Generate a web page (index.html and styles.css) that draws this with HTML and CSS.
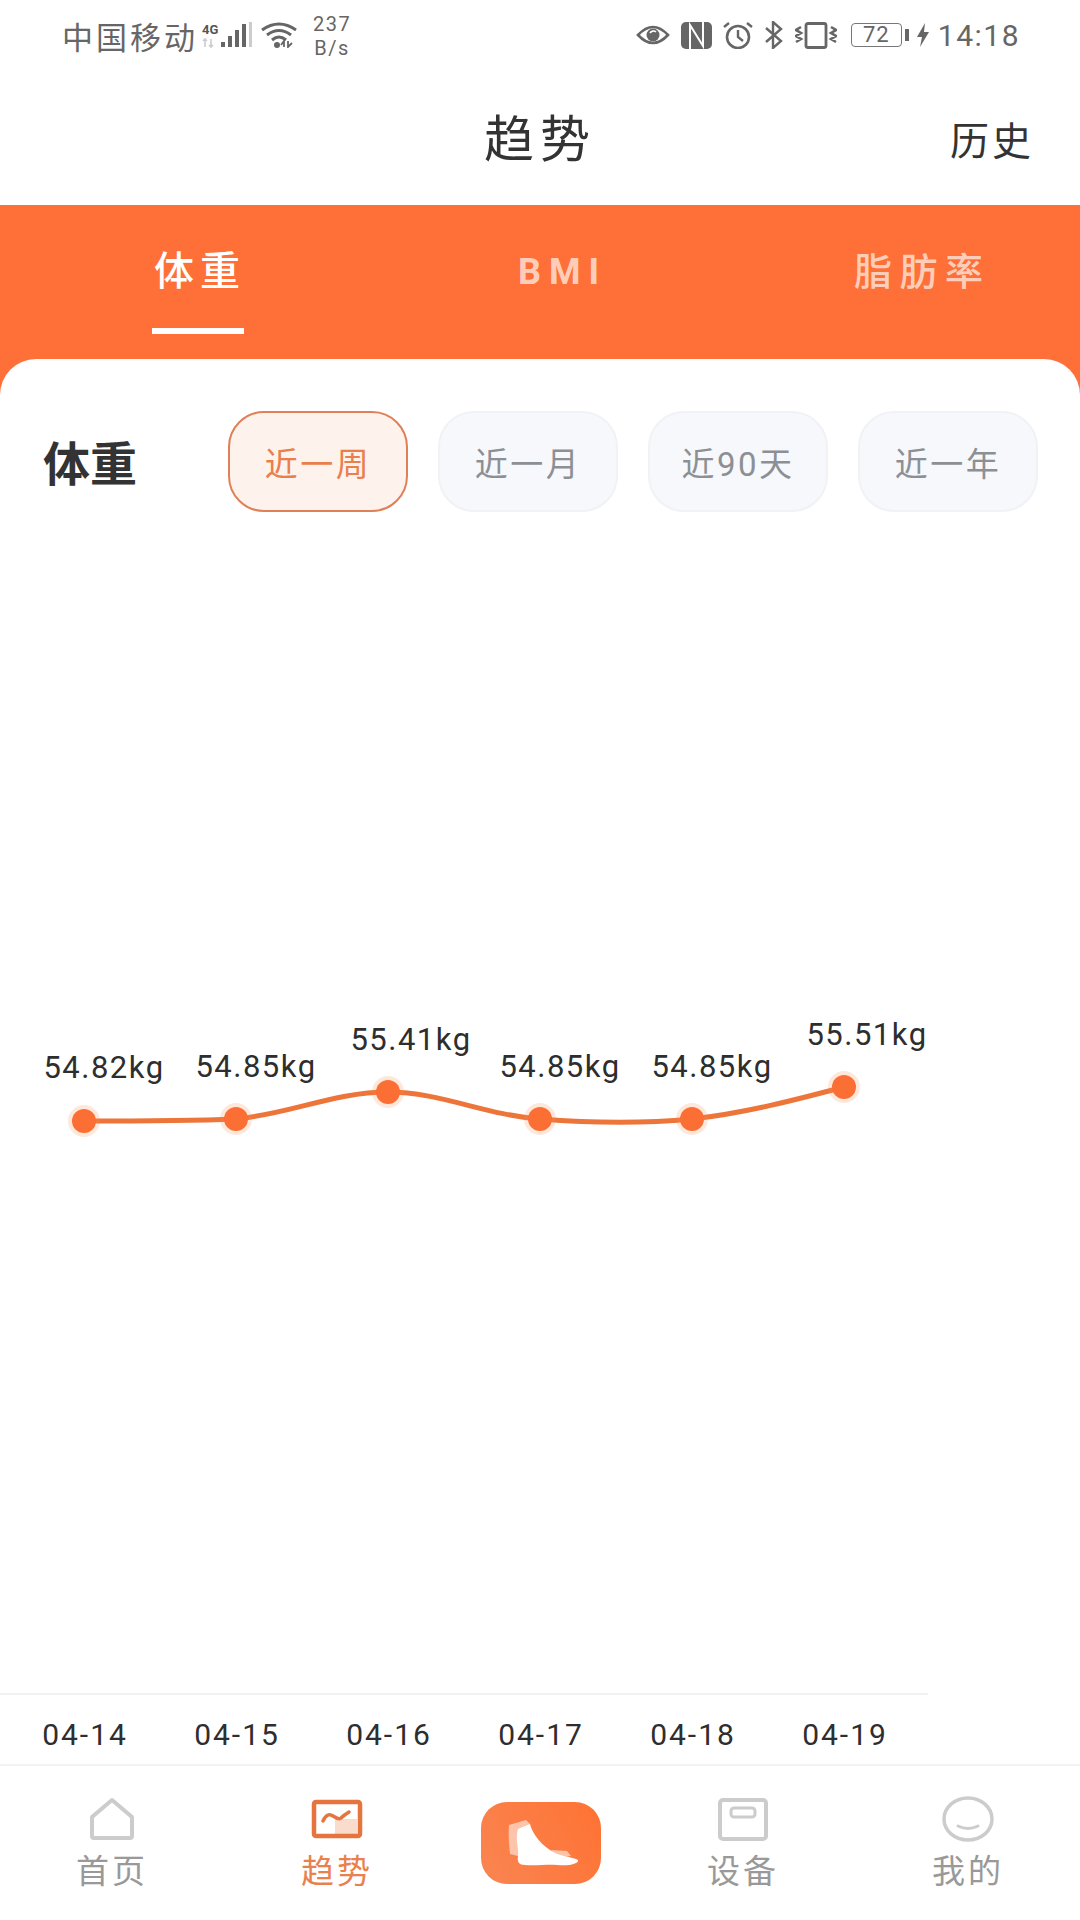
FILE: index.html
```html
<!DOCTYPE html>
<html lang="zh-CN">
<head>
    <meta charset="UTF-8">
    <meta name="viewport" content="width=device-width, initial-scale=1.0">
    <title>趋势</title>
    <link rel="stylesheet" href="styles.css">
</head>
<body>
    <div class="status-bar">
        <div class="status-left">
            <span class="carrier">中国移动</span>
            <svg class="sb-signal" width="50" height="28" viewBox="0 0 50 28">
                <text x="0" y="13" class="sb-4g">4G</text>
                <path d="M3 18v8M1 20l2-2 2 2M9 18v8M7 24l2 2 2-2" fill="none" stroke="#ccc" stroke-width="1.6"/>
                <rect x="19" y="21" width="4" height="5" fill="#666"/>
                <rect x="26" y="15" width="4" height="11" fill="#666"/>
                <rect x="33" y="9" width="4" height="17" fill="#666"/>
                <rect x="40" y="3" width="4" height="23" fill="#666"/>
                <rect x="47" y="1" width="3" height="25" fill="#ccc"/>
            </svg>
            <svg class="sb-wifi" width="37" height="26" viewBox="0 0 37 26">
                <path d="M1 8Q18-4 35 8M6 13Q18 4 30 13M11 18Q18 12 25 18" fill="none" stroke="#666" stroke-width="3"/>
                <circle cx="16" cy="23" r="3" fill="#666"/>
                <path d="M23 25v-6l-3 4M27 19v6l4-4" fill="none" stroke="#666" stroke-width="1.8"/>
            </svg>
            <div class="net-speed"><span>237</span><span>B/s</span></div>
        </div>
        <div class="status-right">
            <svg width="34" height="22" viewBox="0 0 34 22">
                <path d="M2 11Q17-5 32 11Q17 27 2 11Z" fill="none" stroke="#666" stroke-width="2.6"/>
                <circle cx="17" cy="11" r="6.5" fill="#666"/>
                <path d="M14 9a4 4 0 0 1 6-1" fill="none" stroke="#fff" stroke-width="1.6"/>
            </svg>
            <svg width="31" height="27" viewBox="0 0 31 27">
                <rect width="31" height="27" rx="5" fill="#666"/>
                <path d="M9 27V3L22 24V0" fill="none" stroke="#fff" stroke-width="2"/>
            </svg>
            <svg width="30" height="28" viewBox="0 0 30 28">
                <circle cx="15" cy="16" r="11" fill="none" stroke="#666" stroke-width="2.6"/>
                <path d="M15 9v7l5 4" fill="none" stroke="#666" stroke-width="2.4"/>
                <path d="M1 6l5-4M29 6l-5-4" fill="none" stroke="#666" stroke-width="2.4"/>
            </svg>
            <svg width="20" height="28" viewBox="0 0 20 28">
                <path d="M2 7L17 20L9 27V1L17 8L2 21" fill="none" stroke="#666" stroke-width="2.4"/>
            </svg>
            <svg width="42" height="27" viewBox="0 0 42 27">
                <rect x="11" y="1.500" width="20" height="24" rx="2" fill="none" stroke="#666" stroke-width="2.800"/>
                <path d="M6 5L1 8L6 11L1 14L6 17L1 20M36 5L41 8L36 11L41 14L36 17L41 20" fill="none" stroke="#666" stroke-width="2.600"/>
            </svg>
            <div class="battery"><span class="battery-box">72</span><i class="battery-nub"></i></div>
            <svg class="sb-bolt" width="12" height="24" viewBox="0 0 12 24">
                <path d="M8 0L0 14H5L3 24L12 9H7Z" fill="#666"/>
            </svg>
            <span class="clock">14:18</span>
        </div>
    </div>

    <header class="header">
        <h1>趋势</h1>
        <a class="history">历史</a>
    </header>

    <nav class="tabs">
        <div><span class="tab active">体重</span></div>
        <div><span class="tab tab-latin">BMI</span></div>
        <div><span class="tab">脂肪率</span></div>
    </nav>

    <main class="card">
        <div class="filter-row">
            <div class="filter-title">体重</div>
            <div class="pills">
                <div class="pill active">近一周</div>
                <div class="pill">近一月</div>
                <div class="pill">近90天</div>
                <div class="pill">近一年</div>
            </div>
        </div>

        <!-- viewBox uses page coordinates so points read the same as the screenshot -->
        <svg class="chart" width="1080" height="1252" viewBox="0 512 1080 1252">
            <path class="chart-line" d="M84 1121C135 1121 185 1121 236 1119C290 1114 335 1092 388 1092C440 1092 485 1115 540 1119C590 1123 640 1124 692 1119C745 1113 795 1100 844 1087"/>

            <circle class="dot-halo" cx="84" cy="1121" r="16"/>
            <circle class="dot-halo" cx="236" cy="1119" r="16"/>
            <circle class="dot-halo" cx="388" cy="1092" r="16"/>
            <circle class="dot-halo" cx="540" cy="1119" r="16"/>
            <circle class="dot-halo" cx="692" cy="1119" r="16"/>
            <circle class="dot-halo" cx="844" cy="1087" r="16"/>
            <circle class="dot" cx="84" cy="1121" r="12"/>
            <circle class="dot" cx="236" cy="1119" r="12"/>
            <circle class="dot" cx="388" cy="1092" r="12"/>
            <circle class="dot" cx="540" cy="1119" r="12"/>
            <circle class="dot" cx="692" cy="1119" r="12"/>
            <circle class="dot" cx="844" cy="1087" r="12"/>

            <text class="value" x="104" y="1078">54.82kg</text>
            <text class="value" x="256" y="1077">54.85kg</text>
            <text class="value" x="411" y="1050">55.41kg</text>
            <text class="value" x="560" y="1077">54.85kg</text>
            <text class="value" x="712" y="1077">54.85kg</text>
            <text class="value" x="867" y="1045">55.51kg</text>

            <line class="axis" x1="0" y1="1694" x2="928" y2="1694"/>
            <text class="date" x="85" y="1745">04-14</text>
            <text class="date" x="237" y="1745">04-15</text>
            <text class="date" x="389" y="1745">04-16</text>
            <text class="date" x="541" y="1745">04-17</text>
            <text class="date" x="693" y="1745">04-18</text>
            <text class="date" x="845" y="1745">04-19</text>
        </svg>
    </main>

    <footer class="tabbar">
        <div class="nav-item">
            <svg width="48" height="44" viewBox="0 0 48 44">
                <path d="M24 3L44 20V39Q44 41 42 41H6Q4 41 4 39V20Z" fill="none" stroke="#ccc" stroke-width="4" stroke-linejoin="round"/>
            </svg>
            <span>首页</span>
        </div>
        <div class="nav-item active">
            <svg width="52" height="44" viewBox="0 0 52 44">
                <rect x="24" y="22" width="22" height="15" fill="#f9dccb"/>
                <rect x="3" y="5" width="46" height="34" rx="2" fill="none" stroke="#e5743f" stroke-width="4.500"/>
                <path d="M12 24Q16 15 22 19T30 21T38 15" fill="none" stroke="#e5743f" stroke-width="3.500" stroke-linecap="round"/>
            </svg>
            <span>趋势</span>
        </div>
        <div class="nav-center">
            <svg width="120" height="82" viewBox="0 0 120 82">
                <path d="M28 23L45 18L49 22L37 54L29 52Q27 38 28 23Z" fill="#fcc4ab"/>
                <path d="M70 48L86 49L90 54L76 56Z" fill="#fcc4ab"/>
                <path d="M37 27L49 22C52 34 62 44 72 50C82 55 92 55 97 58C98 62 88 64 76 63C66 62 56 64 44 63C38 63 36 60 37 54C38 46 34 38 37 27Z" fill="#fff"/>
            </svg>
        </div>
        <div class="nav-item">
            <svg width="52" height="44" viewBox="0 0 52 44">
                <rect x="3" y="3" width="46" height="39" rx="3" fill="none" stroke="#ccc" stroke-width="4"/>
                <rect x="14" y="11" width="24" height="9" rx="3" fill="none" stroke="#ccc" stroke-width="3"/>
            </svg>
            <span>设备</span>
        </div>
        <div class="nav-item">
            <svg width="52" height="46" viewBox="0 0 52 46">
                <ellipse cx="26" cy="23" rx="24" ry="21" fill="none" stroke="#ccc" stroke-width="3.500"/>
                <path d="M16 30Q26 35 36 30" fill="none" stroke="#ccc" stroke-width="3" stroke-linecap="round"/>
            </svg>
            <span>我的</span>
        </div>
    </footer>
</body>
</html>
```

FILE: styles.css
```css
* { box-sizing: border-box; }
html, body { margin: 0; padding: 0; }
body { width: 1080px; height: 1920px; overflow: hidden; background: #fff; font-family: "Roboto", "Noto Sans CJK SC", sans-serif; color: #333; }

/* status bar */
.status-bar { height: 70px; display: flex; justify-content: space-between; align-items: center; padding: 0 60px 0 62px; color: #666; }
.status-left, .status-right { display: flex; align-items: center; }
.carrier { font-size: 31px; letter-spacing: 3px; }
.sb-signal { margin-left: 4px; }
.sb-4g { font-size: 13px; font-weight: 700; fill: #555; }
.sb-wifi { margin-left: 9px; }
.net-speed { display: flex; flex-direction: column; align-items: center; margin: 2px 0 0 15px; font-size: 20px; line-height: 24px; letter-spacing: 1.500px; }
.status-right svg { margin-left: 11px; }
.battery { display: flex; align-items: center; margin-left: 14px; }
.battery-box { width: 51px; height: 24px; border: 1.5px solid #777; border-radius: 4px; font-size: 22px; line-height: 21px; text-align: center; letter-spacing: 1px; }
.battery-nub { width: 4px; height: 12px; margin-left: 3px; background: #666; }
.status-right .sb-bolt { margin-left: 8px; }
.clock { margin-left: 9px; font-size: 30px; letter-spacing: 1.500px; }

/* title */
.header { position: relative; height: 135px; display: flex; justify-content: center; align-items: center; }
.header h1 { margin: 0 0 5px; font-size: 50px; font-weight: 400; letter-spacing: 6px; color: #333; }
.history { position: absolute; right: 46px; top: 50px; font-size: 39px; line-height: 44px; letter-spacing: 3px; color: #333; }

/* orange tabs */
.tabs { height: 194px; display: grid; grid-template-columns: 364px 336px 1fr; padding: 47px 0 0 152px; background: #fe7037; }
.tab { display: inline-block; height: 82px; padding: 0 2px; border-bottom: 6px solid transparent; font-size: 38px; font-weight: 500; line-height: 40px; letter-spacing: 7.500px; color: rgba(255,255,255,0.68); white-space: nowrap; }
.tab.active { width: 92px; padding-right: 0; border-bottom-color: #fff; font-size: 40px; letter-spacing: 6px; color: #fff; }
.tab-latin { font-size: 36px; font-weight: 700; font-family: "Roboto", sans-serif; letter-spacing: 8px; }

/* card */
.card { height: 1405px; margin-top: -40px; padding-top: 52px; border-radius: 36px 36px 0 0; background: #fff; }
.filter-row { display: flex; align-items: center; padding-left: 43px; }
.filter-title { width: 185px; margin-bottom: 2px; font-size: 47px; font-weight: 700; color: #333; }
.pills { display: flex; gap: 30px; }
.pill { width: 180px; height: 101px; border: 2px solid #f0f2f5; border-radius: 36px; background: #f6f8fc; font-size: 33px; line-height: 103px; text-align: center; letter-spacing: 2.500px; color: #8c9094; }
.pill.active { border-color: #e08058; background: #fef2ec; color: #e97f4c; }

/* chart */
.chart { display: block; }
.chart-line { fill: none; stroke: #ee7539; stroke-width: 5; }
.dot { fill: #fb6f34; }
.dot-halo { fill: rgba(251,140,80,0.2); }
.value { font-size: 31px; letter-spacing: 1.5px; text-anchor: middle; fill: #2e2e2e; }
.date { font-size: 30px; letter-spacing: 2px; text-anchor: middle; fill: #2e2e2e; }
.axis { stroke: #f1f1f1; stroke-width: 2; }

/* bottom nav */
.tabbar { height: 156px; display: grid; grid-template-columns: 224px 226px 180px 226px 224px; padding-top: 30px; border-top: 2px solid #f3f3f3; }
.nav-item { display: flex; flex-direction: column; align-items: center; font-size: 33px; line-height: 44px; letter-spacing: 3px; color: #999; }
.nav-item svg { display: block; height: 46px; margin-bottom: 8px; }
.nav-item.active { color: #e9814f; }
.nav-center { justify-self: center; width: 120px; height: 82px; margin: 6px 0 0 2px; border-radius: 26px; background: linear-gradient(60deg, #f98552, #ff7233); }
.nav-center svg { display: block; }
```
